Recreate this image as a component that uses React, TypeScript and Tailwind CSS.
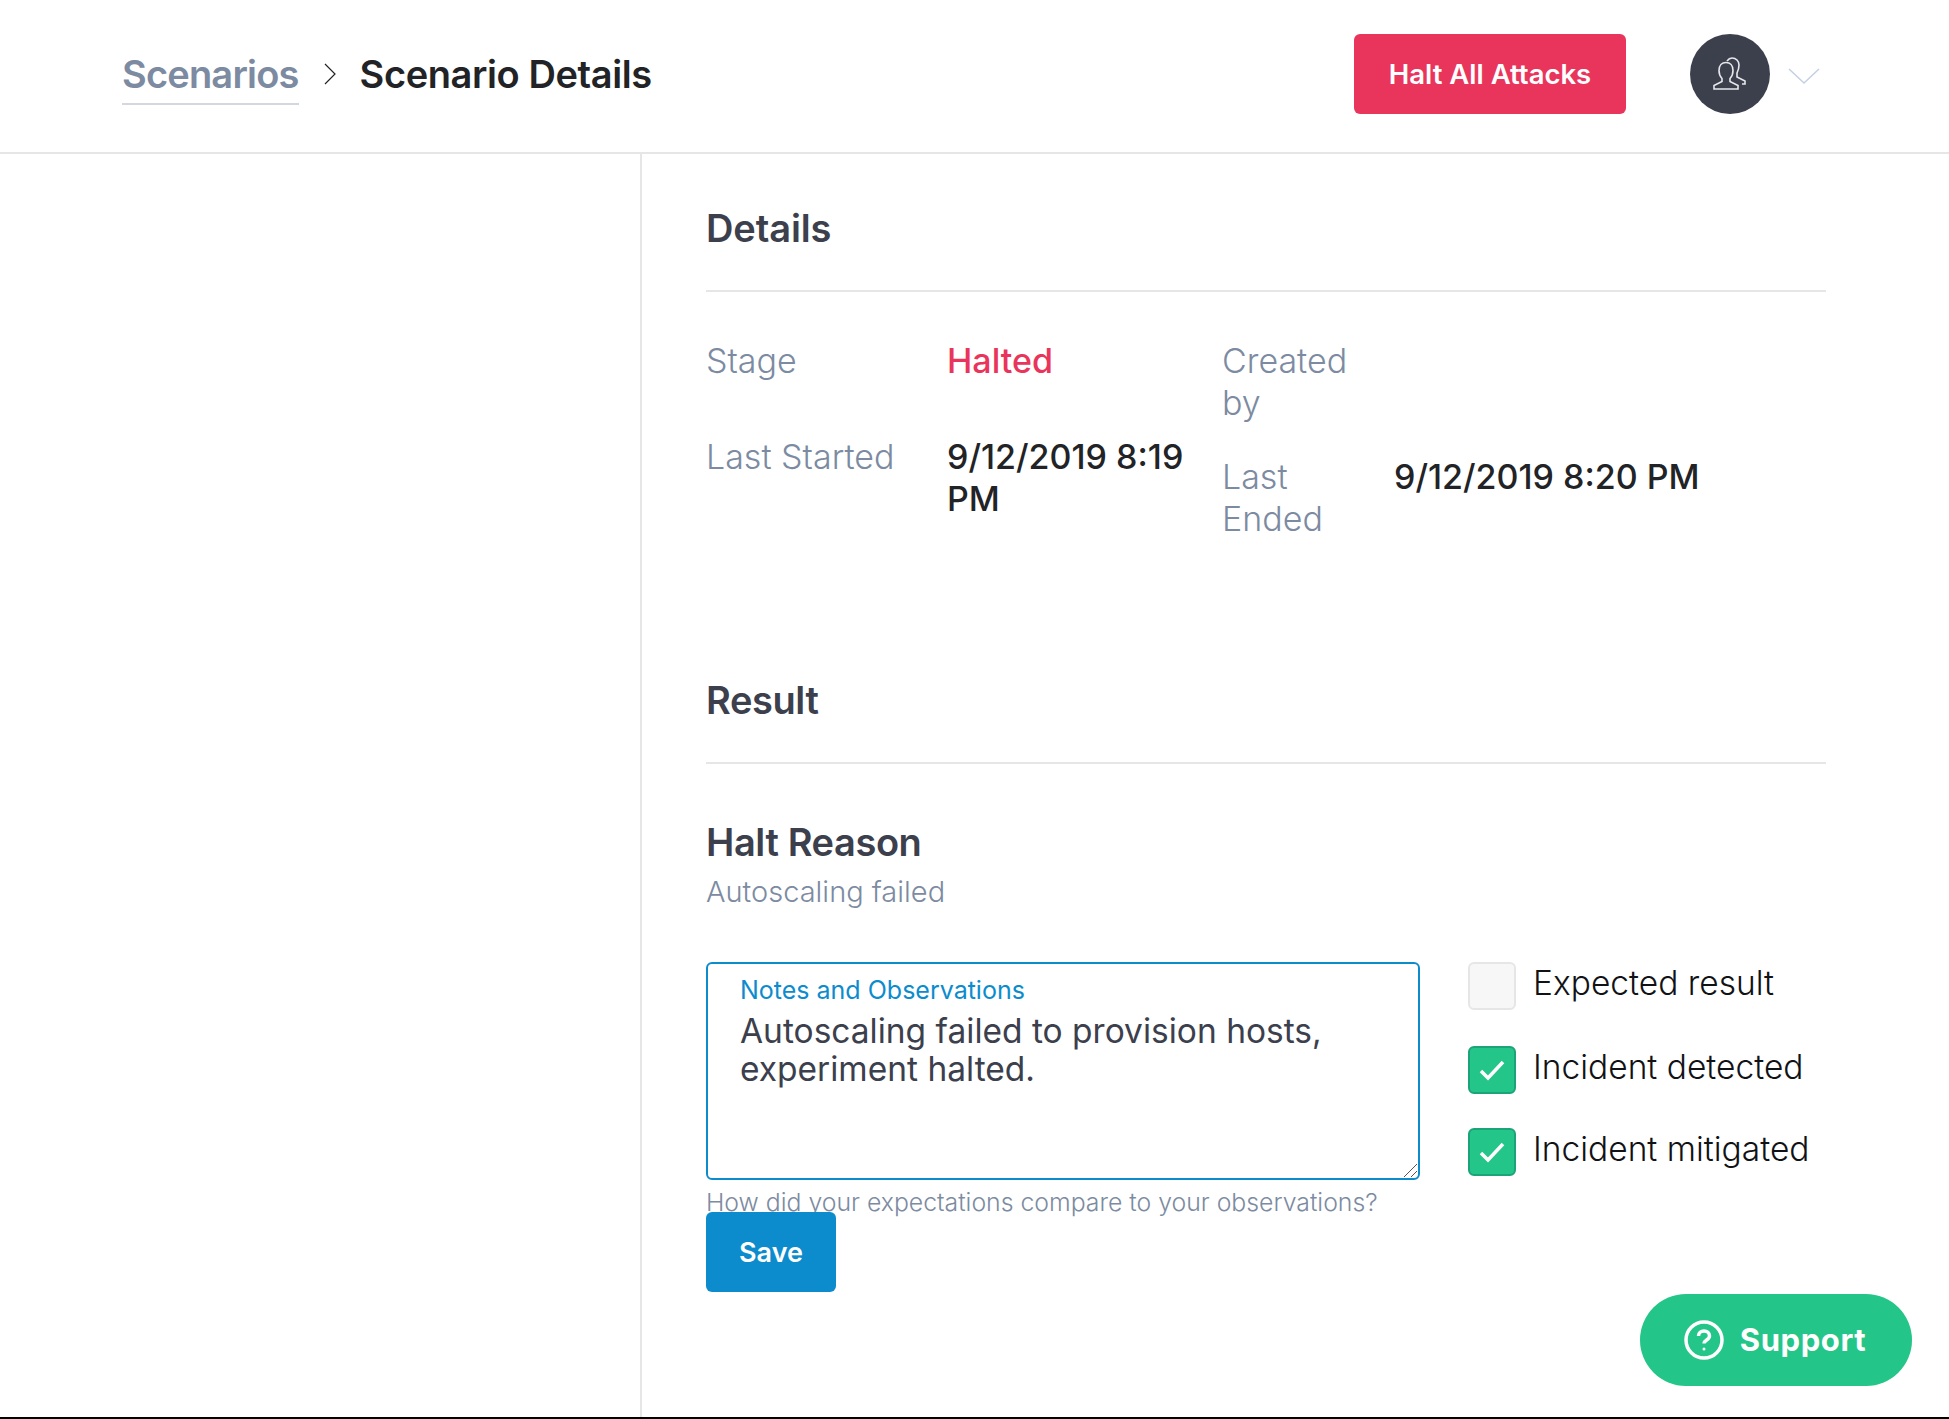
import React from "react";

const font = "font-['Inter','Liberation_Sans',sans-serif]";

const DetailRow = ({
  label,
  value,
  labelWidth,
  valueClass = "text-[#222326] font-medium",
  className = "",
}: {
  label: string;
  value?: string;
  labelWidth: string;
  valueClass?: string;
  className?: string;
}) => (
  <div className={`flex text-[34px] leading-[42px] ${className}`}>
    <div className={`${labelWidth} shrink-0 pr-[12px] text-[#7c8ba1] font-light`}>{label}</div>
    {value && <div className={valueClass}>{value}</div>}
  </div>
);

const CheckItem = ({ label, checked, className = "" }: { label: string; checked?: boolean; className?: string }) => (
  <label className={`flex items-start ${className}`}>
    <span
      className={`w-[48px] h-[48px] rounded-[6px] border-2 flex items-center justify-center shrink-0 ${
        checked ? "bg-[#24c589] border-[#1ba37a]" : "bg-[#f7f7f7] border-[#e6e6e6]"
      }`}
    >
      {checked && (
        <svg width="26" height="22" viewBox="0 0 26 22" fill="none">
          <path d="M2 12l7 7L24 3" stroke="white" strokeWidth="3.5" />
        </svg>
      )}
    </span>
    <span className="ml-[17px] text-[33.500px] leading-[42px] text-[#111216] font-light">{label}</span>
  </label>
);

export default function App() {
  return (
    <div className={`${font} relative w-[1949px] h-[1419px] bg-white overflow-hidden border-b-2 border-black`}>
      <header className="h-[154px] border-b-2 border-[#e6e6e6] flex items-center pl-[122px] pr-[129px] pb-[4px]">
        <a className="text-[38px] leading-[44px] font-semibold text-[#7c8ba1] border-b-2 border-[#d5d7e0] pb-[7px] mt-[9px] tracking-[-0.8px]">
          Scenarios
        </a>
        <svg className="ml-[24px] mr-[23px]" width="14" height="24" viewBox="0 0 14 24" fill="none">
          <path d="M2 2l10 10L2 22" stroke="#222326" strokeWidth="1.2" />
        </svg>
        <h1 className="text-[38px] leading-[44px] font-semibold text-[#222326] tracking-[-0.4px]">Scenario Details</h1>
        <button className="ml-auto w-[272px] h-[80px] rounded-[6px] bg-[#e9345c] text-white text-[27.500px] font-semibold">
          <span className="relative top-[1px]">Halt All Attacks</span>
        </button>
        <div className="ml-[64px] w-[80px] h-[80px] rounded-full bg-[#3c404d] flex items-center justify-center">
          <svg width="36" height="34" viewBox="0 0 36 34" fill="none" stroke="#e8e8ea" strokeWidth="1.6">
            <path d="M2 32v-3.500l8-4v-3c-2-2-3-4-3-8 0-5 3-8 7-8s7 3 7 8c0 4-1 6-3 8v3l8 4v3.500z" />
            <path d="M15 4c1.500-2 3-3 5-3 4 0 7 3 7 7 0 4-1 6-2 8v4l8 4v3h-3" />
          </svg>
        </div>
        <svg className="ml-[18px] mt-[4px]" width="32" height="18" viewBox="0 0 32 18" fill="none">
          <path d="M1 2l15 14L31 2" stroke="#c6d0e4" strokeWidth="1.6" />
        </svg>
      </header>

      <div className="flex">
        <aside className="w-[642px] h-[1263px] border-r-2 border-[#e6e6e6] shrink-0" />
        <main className="pl-[64px] w-[1184px] shrink-0">
          <h2 className="text-[38px] leading-[48px] font-semibold text-[#3c404d] mt-[50px] tracking-[-0.1px]">Details</h2>
          <div className="h-[2px] bg-[#e6e6e6] mt-[38px]" />

          <div className="flex mt-[48px] h-[279px]">
            <div className="w-[516px] shrink-0">
              <DetailRow label="Stage" value="Halted" labelWidth="w-[241px]" valueClass="text-[#e9345c] font-medium" />
              <DetailRow
                className="mt-[54px]"
                label="Last Started"
                value="9/12/2019 8:19 PM"
                labelWidth="w-[241px]"
              />
            </div>
            <div>
              <DetailRow label="Created by" labelWidth="w-[125px]" />
              <DetailRow
                className="mt-[32px]"
                label="Last Ended"
                value="9/12/2019 8:20 PM"
                labelWidth="w-[172px]"
              />
            </div>
          </div>

          <h2 className="text-[38px] leading-[48px] font-semibold text-[#3c404d] mt-[57px] tracking-[-0.4px]">Result</h2>
          <div className="h-[2px] bg-[#e6e6e6] mt-[38px]" />

          <h3 className="text-[38px] leading-[48px] font-semibold text-[#3c404d] mt-[54px] tracking-[-0.4px]">Halt Reason</h3>
          <p className="text-[29px] leading-[36px] text-[#7c8ba1] font-light mt-[8px]">Autoscaling failed</p>

          <div className="flex mt-[52px]">
            <div className="w-[714px] shrink-0">
              <div className="relative h-[218px] rounded-[6px] border-2 border-[#0c8ccd] px-[32px] pt-[10px]">
                <div className="text-[25px] leading-[32px] text-[#0c8ccd]">Notes and Observations</div>
                <div className="text-[33.500px] leading-[38px] text-[#3c404d] mt-[6px] font-normal">
                  Autoscaling failed to provision hosts,
                  <br />
                  experiment halted.
                </div>
                <svg className="absolute right-[1px] bottom-[1px]" width="14" height="14" viewBox="0 0 14 14" fill="none" stroke="#555" strokeWidth="1">
                  <path d="M1 14L14 1M8 14l6-6" />
                </svg>
              </div>
              <p className="text-[24.800px] leading-[32px] text-[#7c8ba1] font-light mt-[6px] whitespace-nowrap">
                How did your expectations compare to your observations?
              </p>
              <button className="relative block w-[130px] h-[80px] rounded-[6px] bg-[#0c8ccd] text-white text-[27px] font-semibold -mt-[6px]">
                <span className="relative top-[1px]">Save</span>
              </button>
            </div>
            <div className="ml-[48px]">
              <CheckItem label="Expected result" />
              <CheckItem className="mt-[36px]" label="Incident detected" checked />
              <CheckItem className="mt-[34px]" label="Incident mitigated" checked />
            </div>
          </div>
        </main>
      </div>

      <button className="absolute left-[1640px] top-[1294px] w-[272px] h-[92px] rounded-full bg-[#24c589] text-white flex items-center justify-center">
        <svg width="40" height="40" viewBox="0 0 40 40" fill="none" stroke="white" strokeWidth="3.5">
          <circle cx="20" cy="20" r="18" />
          <path d="M14.500 16c0-3 2.500-5 5.500-5s5.500 2 5.500 5c0 4-5.500 4-5.500 7.500" strokeWidth="3.500" />
          <circle cx="20" cy="29" r="1.500" fill="white" stroke="none" />
        </svg>
        <span className="ml-[16px] mr-[2px] text-[31px] font-bold tracking-[0.6px]">Support</span>
      </button>
    </div>
  );
}
